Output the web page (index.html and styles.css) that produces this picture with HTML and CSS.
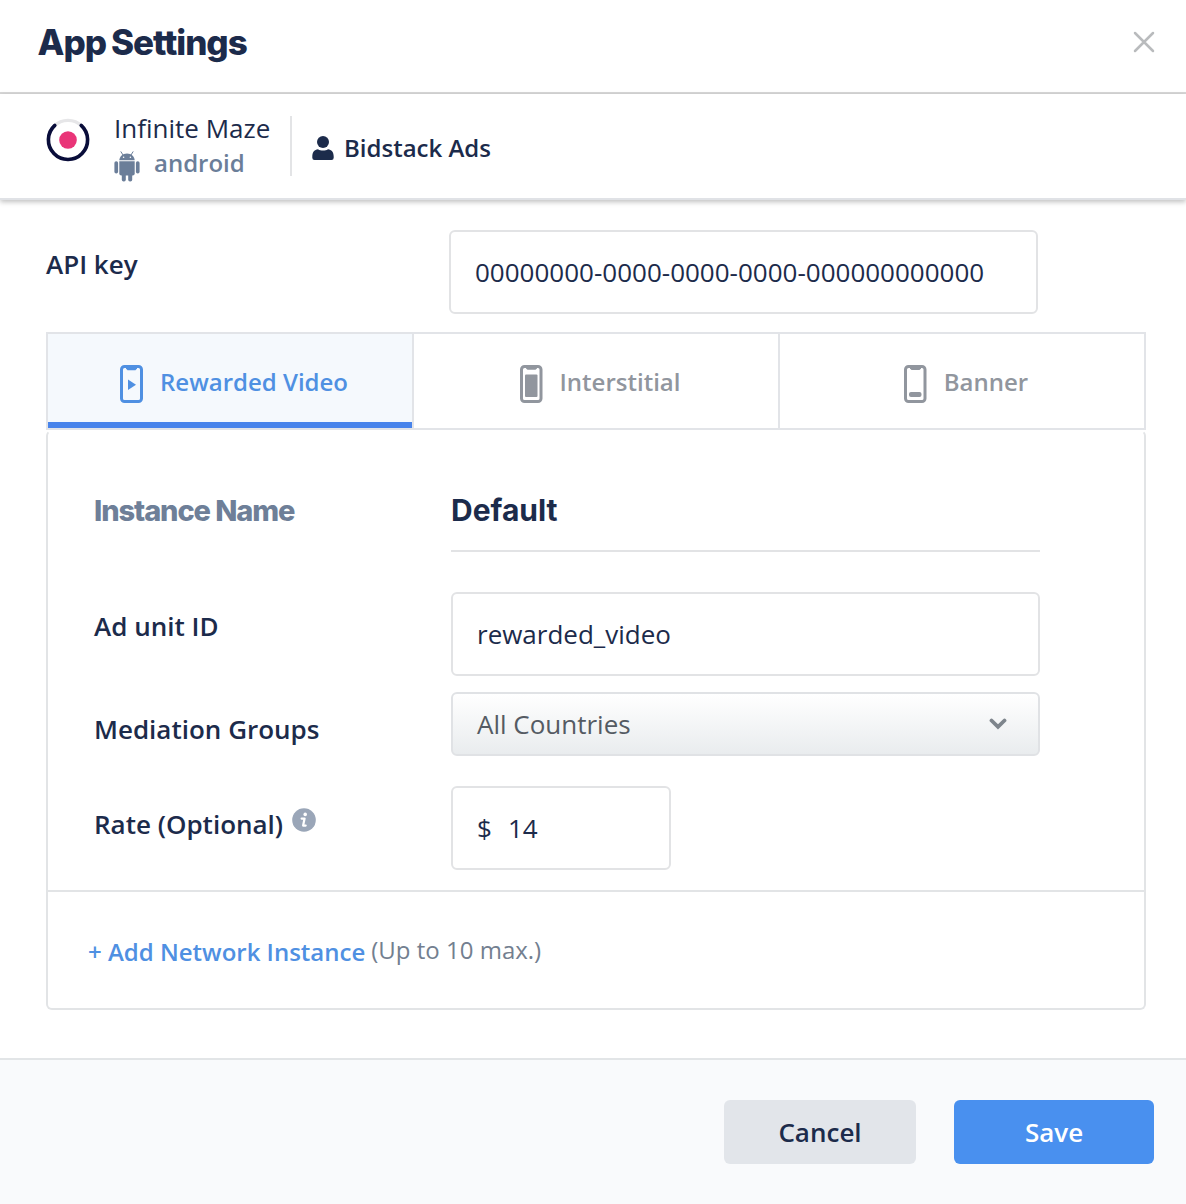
FILE: index.html
```html
<!DOCTYPE html>
<html lang="en">
<head>
<meta charset="utf-8">
<title>App Settings</title>
<link rel="stylesheet" href="styles.css">
</head>
<body>
<main class="dialog">
  <header class="header">
    <h1 class="title">App Settings</h1>
    <svg class="close" viewBox="0 0 22 22" width="22" height="22"><path d="M2 2L20 20M20 2L2 20" stroke="#b9bbbd" stroke-width="2.5" stroke-linecap="round"/></svg>
  </header>

  <section class="appbar">
    <svg class="logo" viewBox="0 0 44 44" width="44" height="44">
      <circle cx="22" cy="22" r="19.6" fill="none" stroke="#e6e6e8" stroke-width="3.4"/>
      <path d="M8.8 7.4A19.6 19.6 0 1 0 35.2 7.4" fill="none" stroke="#090d3a" stroke-width="3.6" stroke-linecap="round"/>
      <circle cx="22" cy="22" r="8.8" fill="#e93578"/>
    </svg>
    <div class="app">
      <div class="app-name">Infinite Maze</div>
      <div class="platform">
        <svg viewBox="0 0 26 31" width="26" height="31" fill="#6b7e99">
          <path d="M5.3 9.2C5.5 5.8 8.6 2.5 13 2.5s7.500 3.300 7.700 6.700z"/>
          <path d="M7 .8L9 4M19 .8L17 4" stroke="#6b7e99" stroke-width="1" stroke-linecap="round"/>
          <circle cx="9.600" cy="6.200" r=".8" fill="#fff"/><circle cx="16.400" cy="6.200" r=".8" fill="#fff"/>
          <path d="M5.300 10.300h15.400v12.200a2 2 0 0 1-2 2H7.300a2 2 0 0 1-2-2z"/>
          <rect x=".4" y="10.200" width="3.700" height="12.400" rx="1.800"/>
          <rect x="21.900" y="10.200" width="3.700" height="12.400" rx="1.800"/>
          <rect x="7.800" y="20" width="4" height="10.500" rx="1.800"/>
          <rect x="14.200" y="20" width="4" height="10.500" rx="1.800"/>
        </svg>
        <span>android</span>
      </div>
    </div>
    <div class="network">
      <svg viewBox="0 0 22 24" width="22" height="24" fill="#1c2b4b"><circle cx="11" cy="6" r="6"/><path d="M.3 20.500C.3 16 2.600 13.500 6 13.200c1.500 1 3 1.300 5 1.300s3.500-.3 5-1.300c3.400.3 5.700 2.800 5.700 7.300v1.300A2.200 2.200 0 0 1 19.500 24h-17A2.200 2.200 0 0 1 .3 21.800z"/></svg>
      <span>Bidstack Ads</span>
    </div>
  </section>

  <div class="content">
    <div class="key-row">
      <div class="label key-label">API key</div>
      <div class="field">00000000-0000-0000-0000-000000000000</div>
    </div>

    <nav class="tabs">
      <div class="tab active">
        <svg viewBox="0 0 24 38" width="24" height="38"><rect x="1.500" y="1.500" width="20" height="35" rx="3" fill="none" stroke="#4f90e2" stroke-width="3"/><path d="M6 2h11v1.500l-1.500 1.700h-8L6 3.500z" fill="#4f90e2"/><path d="M8 14.500l8 5.300-8 5.300z" fill="#4f90e2"/></svg>
        <span>Rewarded Video</span>
      </div>
      <div class="tab">
        <svg viewBox="0 0 24 38" width="24" height="38"><rect x="1.500" y="1.500" width="19.500" height="35" rx="3" fill="none" stroke="#91969e" stroke-width="3"/><path d="M6 2h11v1.500l-1.500 1.300h-8L6 3.500z" fill="#91969e"/><rect x="5" y="9.500" width="12.500" height="22.500" rx="1" fill="#91969e"/></svg>
        <span>Interstitial</span>
      </div>
      <div class="tab">
        <svg viewBox="0 0 24 38" width="24" height="38"><rect x="1.500" y="1.500" width="19.500" height="35" rx="3" fill="none" stroke="#91969e" stroke-width="3"/><path d="M6 2h11v1.500l-1.500 1.500h-8L6 3.500z" fill="#91969e"/><rect x="5" y="27" width="12.500" height="5" rx="2" fill="#91969e"/></svg>
        <span>Banner</span>
      </div>
    </nav>

    <section class="panel">
      <div class="instance">
        <div class="row name-row">
          <div class="name-label">Instance Name</div>
          <div class="name-value">Default</div>
        </div>
        <div class="row unit-row">
          <div class="label unit-label">Ad unit ID</div>
          <div class="field">rewarded_video</div>
        </div>
        <div class="row group-row">
          <div class="label group-label">Mediation Groups</div>
          <div class="select"><span>All Countries</span>
            <svg viewBox="0 0 18 12" width="18" height="12"><path d="M2.500 2.500L9 8.800l6.500-6.300" fill="none" stroke="#7e858c" stroke-width="3.800" stroke-linecap="round"/></svg>
          </div>
        </div>
        <div class="row rate-row">
          <div class="label rate-label"><span>Rate (Optional)</span>
            <svg viewBox="0 0 24 24" width="24" height="24"><circle cx="12" cy="12" r="11.800" fill="#9aa6b8"/><circle cx="13.200" cy="6.400" r="1.800" fill="#fff"/><path d="M9.600 10.600h3l-1.500 7h2.600" fill="none" stroke="#fff" stroke-width="2.200" stroke-linecap="round" stroke-linejoin="round"/></svg>
          </div>
          <div class="field rate-field"><span>$</span><span>14</span></div>
        </div>
      </div>
      <div class="add-row"><span class="add-link">+ Add Network Instance</span><span class="add-hint">(Up to 10 max.)</span></div>
    </section>
  </div>

  <footer class="footer">
    <button class="button cancel">Cancel</button>
    <button class="button save">Save</button>
  </footer>
</main>
</body>
</html>
```
FILE: styles.css
```css
* { box-sizing: border-box; }
body {
  margin: 0;
  background: #fff;
  color: #1c2b4b;
  font: 400 26px/36px "Open Sans", "Noto Sans", sans-serif;
  white-space: nowrap;
}
svg { display: block; flex: none; }
.dialog { width: 1186px; height: 1204px; display: flex; flex-direction: column; overflow: hidden; }

.header {
  height: 94px;
  flex: none;
  display: flex;
  justify-content: space-between;
  align-items: flex-start;
  padding: 21px 31px 0 37.5px;
  border-bottom: 2px solid #d8d8d8;
}
.title { margin: 1px 0 0; font: 800 35px/40px Inter, sans-serif; letter-spacing: -1.05px; word-spacing: -1.5px; }
.close { margin-top: 10px; }

.appbar {
  height: 106px;
  flex: none;
  display: flex;
  padding-left: 46px;
  border-bottom: 2px solid #e0e2e6;
  box-shadow: 0 2px 5px rgba(0, 0, 0, .25);
}
.logo { margin-top: 24px; }
.app {
  width: 178px;
  height: 60px;
  margin: 22px 20px 0 24px;
  border-right: 2px solid #e3e4e6;
}
.app-name { line-height: 34px; margin-top: -5px; }
.platform {
  display: flex;
  align-items: center;
  gap: 14px;
  height: 36px;
  color: #6b7e99;
  font-size: 24px;
  font-weight: 600;
}
.platform svg { margin-top: 6px; }
.network {
  display: flex;
  align-items: center;
  gap: 10px;
  height: 36px;
  margin-top: 36px;
  font-size: 24px;
  font-weight: 600;
}
.network svg { margin-top: -1px; }

.content { height: 858px; flex: none; padding: 30px 40px 0 46px; }
.label { font-weight: 600; }
.key-row { display: grid; grid-template-columns: 403px 589px; height: 102px; }
.key-label { margin-top: 16px; }
.field {
  height: 84px;
  display: flex;
  align-items: center;
  padding-left: 24px;
  border: 2px solid #e2e3e5;
  border-radius: 6px;
}

.tabs { display: grid; grid-template-columns: 368px 366px 366px; height: 98px; }
.tab {
  display: flex;
  justify-content: center;
  align-items: center;
  gap: 16px;
  padding-left: 8px;
  border: 2px solid #e2e4e8;
  border-left: 0;
  color: #91969e;
  font-size: 24px;
  font-weight: 600;
}
.tab svg { margin-top: 6px; }
.tab span { margin-top: 1px; }
.active {
  border-left: 2px solid #e2e4e8;
  background: #f5f9fd;
  box-shadow: inset 0 -6px #4884eb;
  color: #4f90e2;
}

.panel { width: 1100px; height: 580px; border: 2px solid #e2e4e6; border-top-color: transparent; border-radius: 6px; }
.instance { height: 460px; border-bottom: 2px solid #e2e4e6; }
.row { display: grid; grid-template-columns: 357px 589px; padding-left: 46px; }
.name-row { height: 120px; font: 700 30px/36px Inter, sans-serif; }
.name-label { margin-top: 61px; color: #6e7f98; font-size: 29px; font-weight: 800; letter-spacing: -1.1px; }
.name-value { padding-top: 60px; border-bottom: 2px solid #e2e3e5; }
.unit-row { height: 140px; padding-top: 40px; }
.unit-label { margin-top: 16px; }
.group-row { height: 94px; }
.group-label { margin-top: 19px; }
.select {
  height: 64px;
  display: flex;
  justify-content: space-between;
  align-items: center;
  padding: 0 31px 0 24px;
  border: 2px solid #e0e2e5;
  border-radius: 6px;
  background: linear-gradient(#fff, #e9ecee);
  color: #555b63;
}
.rate-label { display: flex; gap: 9px; margin-top: 20px; }
.rate-label svg { margin-top: 2px; }
.rate-field { width: 220px; gap: 16px; }
.add-row { height: 118px; display: flex; align-items: flex-start; padding: 42px 0 0 40px; gap: 6px; font-size: 24px; }
.add-link { color: #4f90e2; font-weight: 600; }
.add-hint { margin-top: -2px; color: #737f90; }

.footer {
  flex: 1;
  display: flex;
  justify-content: flex-end;
  gap: 38px;
  padding: 40px 32px 0;
  border-top: 2px solid #e2e5e7;
  background: #f9fafc;
}
.button { height: 64px; padding: 0; border: 0; border-radius: 6px; font: 600 26px/64px "Open Sans", "Noto Sans", sans-serif; }
.cancel { width: 192px; background: #e2e5ea; color: #1c2b4b; }
.save { width: 200px; background: #4990ef; color: #fff; }
```
